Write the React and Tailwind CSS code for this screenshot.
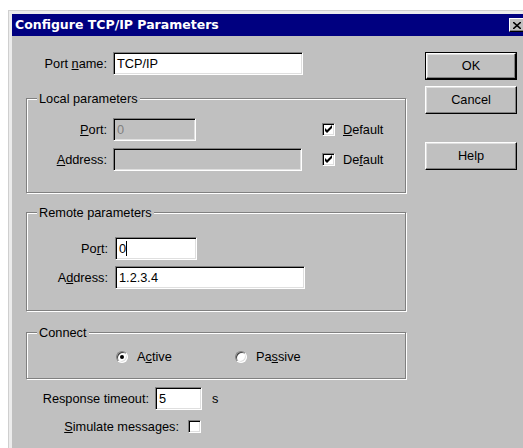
import React from 'react';

const sunken =
  'border border-t-[#808080] border-l-[#808080] border-b-white border-r-white shadow-[inset_1px_1px_0_#000,inset_-1px_-1px_0_#dfdfdf]';

const Field = ({ className = '', value, disabled, caret }) => (
  <div
    className={`h-[23px] ${sunken} ${disabled ? 'bg-[#c0c0c0] text-[#808080]' : 'bg-white text-black'} flex items-center pl-[3px] ${className}`}
  >
    <span className="leading-[15px]">{value}</span>
    {caret && <span className="w-[1px] h-[15px] bg-black" />}
  </div>
);

// classic 3px-thick tick
const CheckBox = ({ checked }) => (
  <div className={`w-[13px] h-[13px] bg-white ${sunken} flex items-center justify-center`}>
    {checked && (
      <svg width="9" height="9" viewBox="0 0 9 9">
        <path d="M1 3 L3 5 L8 0 L8 3 L3 8 L1 6 Z" fill="#000" />
      </svg>
    )}
  </div>
);

const Radio = ({ checked }) => (
  <div className="w-[12px] h-[12px] rounded-full bg-white border border-t-[#808080] border-l-[#808080] border-b-white border-r-white shadow-[inset_1px_1px_0_#404040,inset_-1px_-1px_0_#dfdfdf] flex items-center justify-center">
    {checked && <div className="w-[4px] h-[4px] rounded-full bg-black" />}
  </div>
);

const Group = ({ title, className = '', children }) => (
  <div className={`relative w-[380px] border border-[#808080] shadow-[inset_1px_1px_0_#fff,1px_1px_0_#fff] ${className}`}>
    <span className="absolute left-[10px] top-[-8px] leading-[15px] bg-[#c0c0c0] px-[2px]">{title}</span>
    {children}
  </div>
);

const Button = ({ children }) => (
  <div className="w-[92px] h-[28px] bg-[#c0c0c0] border border-t-white border-l-white border-b-black border-r-black shadow-[inset_-1px_-1px_0_#808080,inset_1px_1px_0_#dfdfdf] flex items-center justify-center">
    {children}
  </div>
);

export default function App() {
  return (
    <div className="w-[523px] h-[448px] overflow-hidden bg-white font-['Liberation_Sans',Arial,sans-serif] text-[12.75px] text-black">
      <div className="ml-[8px] mt-[10px] w-[523px] h-[470px] border border-[#cfcfcf] bg-[#ececec] p-[3px] flex flex-col">
        {/* title bar */}
        <div className="h-[22px] shrink-0 bg-[#000080] flex items-center justify-between pl-[3px] pr-[2px]">
          <span className="font-['DejaVu_Sans',sans-serif] font-bold text-[12.5px] text-white leading-[16px]">
            Configure TCP/IP Parameters
          </span>
          <div className="w-[16px] h-[14px] bg-[#c0c0c0] border border-t-white border-l-white border-b-black border-r-black shadow-[inset_-1px_-1px_0_#808080] flex items-center justify-center">
            <svg width="8" height="7" viewBox="0 0 8 7">
              <path d="M0 0 L8 7 M8 0 L0 7" stroke="#000" strokeWidth="1.6" />
            </svg>
          </div>
        </div>

        {/* dialog body */}
        <div className="flex-1 bg-[#c0c0c0] flex">
          <div className="w-[394px] pl-[14px] pt-[16px] flex flex-col">
            <div className="flex items-center h-[23px]">
              <span className="w-[81px] text-right">
                Port <u>n</u>ame:
              </span>
              <Field className="ml-[6px] w-[190px]" value="TCP/IP" />
            </div>

            <Group title="Local parameters" className="mt-[23px] h-[95px]">
              <div className="pt-[19px] flex items-center">
                <span className="w-[80px] text-right">
                  <u>P</u>ort:
                </span>
                <Field className="ml-[6px] w-[83px]" value="0" disabled />
                <div className="ml-[126px] flex items-center">
                  <CheckBox checked />
                  <span className="ml-[8px]">
                    <u>D</u>efault
                  </span>
                </div>
              </div>
              <div className="mt-[7px] flex items-center">
                <span className="w-[80px] text-right">
                  <u>A</u>ddress:
                </span>
                <Field className="ml-[6px] w-[189px]" disabled />
                <div className="ml-[20px] flex items-center">
                  <CheckBox checked />
                  <span className="ml-[8px]">
                    De<u>f</u>ault
                  </span>
                </div>
              </div>
            </Group>

            <Group title="Remote parameters" className="mt-[19px] h-[99px]">
              <div className="pt-[24px] flex items-center">
                <span className="w-[81px] text-right">
                  Po<u>r</u>t:
                </span>
                <Field className="ml-[7px] w-[82px]" value="0" caret />
              </div>
              <div className="mt-[6px] flex items-center">
                <span className="w-[81px] text-right">
                  A<u>d</u>dress:
                </span>
                <Field className="ml-[7px] w-[190px]" value="1.2.3.4" />
              </div>
            </Group>

            <Group title="Connect" className="mt-[21px] h-[47px]">
              <div className="pt-[16px] pl-[89px] flex items-center h-[32px]">
                <div className="w-[119px] flex items-center">
                  <Radio checked />
                  <span className="ml-[9px]">
                    A<u>c</u>tive
                  </span>
                </div>
                <div className="flex items-center">
                  <Radio />
                  <span className="ml-[9px]">
                    Pa<u>s</u>sive
                  </span>
                </div>
              </div>
            </Group>

            <div className="mt-[8px] flex items-center h-[23px]">
              <span className="w-[123px] text-right">Response timeout:</span>
              <Field className="ml-[6px] w-[47px]" value="5" />
              <span className="ml-[10px]">s</span>
            </div>

            <div className="mt-[10px] flex items-center h-[13px]">
              <span className="w-[153px] text-right">
                <u>S</u>imulate messages:
              </span>
              <div className="ml-[9px]">
                <CheckBox />
              </div>
            </div>
          </div>

          <div className="ml-[19px] pt-[16px] flex flex-col">
            <div className="border border-black">
              <div className="w-[90px] h-[26px] bg-[#c0c0c0] border border-t-white border-l-white border-b-black border-r-black shadow-[inset_-1px_-1px_0_#808080,inset_1px_1px_0_#dfdfdf] flex items-center justify-center">
                OK
              </div>
            </div>
            <div className="mt-[6px]">
              <Button>Cancel</Button>
            </div>
            <div className="mt-[28px]">
              <Button>Help</Button>
            </div>
          </div>
        </div>
      </div>
    </div>
  );
}
